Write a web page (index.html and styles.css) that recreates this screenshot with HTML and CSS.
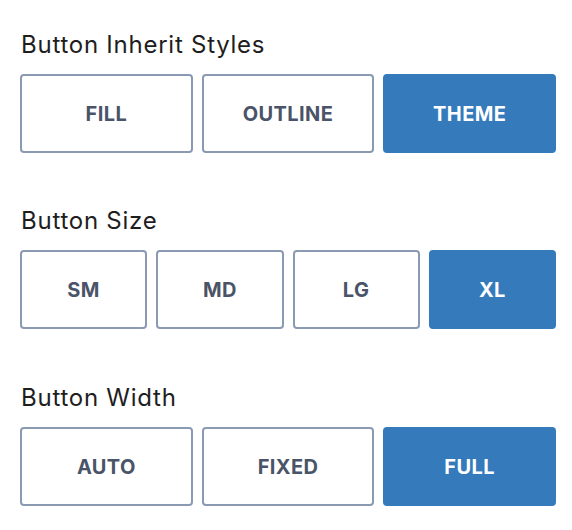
FILE: index.html
```html
<!DOCTYPE html>
<html>
<head>
<meta charset="utf-8">
<link rel="stylesheet" href="styles.css">
</head>
<body>
<div class="panel">
  <section class="group">
    <div class="label">Button Inherit Styles</div>
    <div class="options cols-3">
      <div class="opt">FILL</div>
      <div class="opt">OUTLINE</div>
      <div class="opt active">THEME</div>
    </div>
  </section>
  <section class="group">
    <div class="label">Button Size</div>
    <div class="options cols-4">
      <div class="opt">SM</div>
      <div class="opt">MD</div>
      <div class="opt">LG</div>
      <div class="opt active">XL</div>
    </div>
  </section>
  <section class="group">
    <div class="label">Button Width</div>
    <div class="options cols-3">
      <div class="opt">AUTO</div>
      <div class="opt">FIXED</div>
      <div class="opt active">FULL</div>
    </div>
  </section>
</div>
</body>
</html>
```

FILE: styles.css
```css
html, body {
  margin: 0;
  padding: 0;
  background: #ffffff;
}
body {
  font-family: Inter, "Noto Sans", sans-serif;
}
.panel {
  padding: 31px 16px 0 20px;
  display: flex;
  flex-direction: column;
  gap: 54.3px;
}
.label {
  font-size: 24px;
  line-height: 28px;
  letter-spacing: 0.75px;
  color: #1e1e1e;
  margin-bottom: 15px;
  padding-left: 1px;
}
.options {
  display: grid;
  gap: 9px;
}
.cols-3 { grid-template-columns: repeat(3, 1fr); }
.cols-4 { grid-template-columns: repeat(4, 1fr); }
.opt {
  height: 79px;
  box-sizing: border-box;
  border: 2px solid #8a9ab3;
  border-radius: 4px;
  padding-top: 1px;
  display: flex;
  align-items: center;
  justify-content: center;
  font-size: 20px;
  font-weight: 700;
  color: #4a5468;
  letter-spacing: 0.4px;
}
.opt.active {
  background: #357abb;
  border-color: #357abb;
  color: #ffffff;
}
```
